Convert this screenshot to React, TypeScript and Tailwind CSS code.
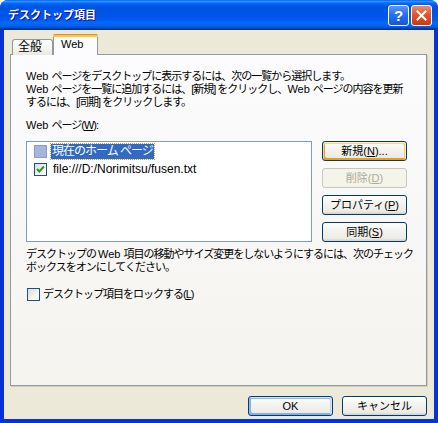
import React from "react";

const font = "font-['Liberation_Sans','Noto_Sans_CJK_JP',sans-serif]";

function U({ children }: { children: React.ReactNode }) {
  return <span className="underline underline-offset-[1px]">{children}</span>;
}

function Web() {
  return <span className="tracking-normal mr-[3px]">Web</span>;
}

function XpButton({
  children,
  variant = "normal",
}: {
  children: React.ReactNode;
  variant?: "normal" | "hot" | "default" | "disabled";
}) {
  const base =
    "w-[85px] h-[20px] rounded-[3px] border flex items-center justify-center text-[11px] leading-none";
  const styles: Record<string, string> = {
    normal:
      "border-[#003C74] text-black bg-[linear-gradient(180deg,#ffffff_0%,#f4f3ee_40%,#ecebe6_85%,#d6d0c5_100%)]",
    hot: "border-[#003C74] text-black bg-[linear-gradient(180deg,#ffffff_0%,#f4f3ee_40%,#ecebe6_85%,#d6d0c5_100%)] shadow-[inset_-1px_1px_#fff0cf,inset_1px_2px_#fdd889,inset_-2px_2px_#fbc761,inset_2px_-2px_#e5a01a]",
    default:
      "border-[#003C74] text-black bg-[linear-gradient(180deg,#ffffff_0%,#f4f3ee_40%,#ecebe6_85%,#d6d0c5_100%)] shadow-[inset_-1px_1px_#cee7ff,inset_1px_2px_#98b8ea,inset_-2px_2px_#bcd4f6,inset_1px_-1px_#89ade4,inset_2px_-2px_#89ade4]",
    disabled: "border-[#C9C7BA] text-[#ACA899] bg-[#F5F4EA]",
  };
  return <div className={`${base} ${styles[variant]}`}>{children}</div>;
}

function Check({ checked, tone = "normal" }: { checked?: boolean; tone?: "normal" | "selected" }) {
  if (tone === "selected") {
    return <div className="w-[13px] h-[13px] border border-[#8A9BC8] bg-[#A6B5DC] shrink-0" />;
  }
  return (
    <div className="w-[13px] h-[13px] border border-[#1C5180] bg-[linear-gradient(135deg,#dcdcd7_0%,#f4f4f0_60%,#ffffff_100%)] shrink-0 flex items-center justify-center">
      {checked && (
        <svg width="9" height="9" viewBox="0 0 9 9">
          <path d="M1 4 L3.3 6.5 L8 1.5" fill="none" stroke="#21A121" strokeWidth="2" />
        </svg>
      )}
    </div>
  );
}

export default function App() {
  return (
    <div className={`w-[438px] h-[423px] flex flex-col bg-[#0831D9] rounded-t-[8px] overflow-hidden ${font} text-[11px] leading-[13px] text-black`}>
      {/* title bar */}
      <div className="h-[30px] shrink-0 flex items-center pl-[8px] pr-[6px] bg-[linear-gradient(180deg,#0058ee_0%,#3593ff_4%,#288eff_6%,#127dff_8%,#036ffc_10%,#0262ee_14%,#0057e5_20%,#0054e3_24%,#0055eb_56%,#005bf5_66%,#026afe_76%,#0062ef_86%,#0052d6_92%,#0040ab_94%,#003092_100%)]">
        <div className="text-white font-bold text-[11px] tracking-[0px] [text-shadow:1px_1px_#0f1089] flex-1 pt-[1px]">
          デスクトップ項目
        </div>
        <div className="flex gap-[2px]">
          <div className="w-[21px] h-[21px] rounded-[3px] border border-white bg-[linear-gradient(180deg,#5a97f8_0%,#2a6ff0_45%,#1555e0_100%)] flex items-center justify-center text-white font-bold text-[15px] leading-none font-['Liberation_Sans',sans-serif]">
            ?
          </div>
          <div className="w-[21px] h-[21px] rounded-[3px] border border-white bg-[linear-gradient(180deg,#ea8c6e_0%,#e0552f_45%,#c63c12_100%)] flex items-center justify-center">
            <svg width="11" height="11" viewBox="0 0 11 11">
              <path d="M1.5 1.5 L9.5 9.5 M9.5 1.5 L1.5 9.5" stroke="white" strokeWidth="2" strokeLinecap="square" />
            </svg>
          </div>
        </div>
      </div>

      {/* client */}
      <div className="flex-1 mx-[4px] mb-[4px] bg-[#ECE9D8] flex flex-col pt-[4px] pl-[6px]">
        {/* tabs */}
        <div className="flex items-end h-[20px] pl-[2px] relative z-10">
          <div className="w-[41px] h-[16px] mb-[-1px] border border-[#919B9C] border-b-0 rounded-t-[3px] bg-[linear-gradient(180deg,#ffffff_0%,#f3f3ef_60%,#e8e7e0_100%)] flex items-center pl-[5px] text-[12px]">
            全般
          </div>
          <div className="w-[45px] h-[21px] mb-[-1px] border-x border-[#919B9C] rounded-t-[3px] bg-[#FCFCFE] flex flex-col">
            <div className="h-[3px] rounded-t-[2px] bg-[linear-gradient(180deg,#e68b2c_0%,#e68b2c_33%,#ffc73c_34%,#ffc73c_100%)] -mx-[1px]" />
            <div className="pl-[7px] pt-[1px]">Web</div>
          </div>
        </div>

        {/* panel */}
        <div className="w-[417px] h-[332px] border border-[#919B9C] bg-[linear-gradient(180deg,#fcfcfe_0%,#f4f3ee_100%)] shadow-[1px_1px_0_#d0cec0] pl-[15px] pt-[15px] flex flex-col">
          <div className="whitespace-nowrap tracking-[-1px]">
            <Web />ページをデスクトップに表示するには、次の一覧から選択します。
            <br />
            <Web />ページを一覧に追加するには、[新規] をクリックし、<Web />ページの内容を更新
            <br />
            するには、[同期] をクリックします。
          </div>
          <div className="mt-[10px] tracking-[-1px]">
            <Web />ページ(<U>W</U>):
          </div>
          <div className="mt-[9px] flex gap-[10px]">
            <div className="w-[286px] h-[101px] border border-[#7F9DB9] bg-white pt-[2px] pl-[7px] flex flex-col">
              <div className="h-[18px] flex items-start pt-[1px]">
                <Check tone="selected" />
                <div className="ml-[4px] -mt-[1px] h-[15px] px-[1px] bg-[#316AC5] text-white outline-1 outline-dotted outline-[#CE9D3A] tracking-[-1px] leading-[15px] text-[12px]">
                  現在のホーム ページ
                </div>
              </div>
              <div className="h-[18px] flex items-start pt-[1px]">
                <Check checked />
                <div className="ml-[6px] leading-[13px] text-[12px]">file:///D:/Norimitsu/fusen.txt</div>
              </div>
            </div>
            <div className="flex flex-col gap-[7px]">
              <XpButton variant="hot">
                新規(<U>N</U>)...
              </XpButton>
              <XpButton variant="disabled">
                削除(<U>D</U>)
              </XpButton>
              <XpButton>
                プロパティ(<U>P</U>)
              </XpButton>
              <XpButton>
                同期(<U>S</U>)
              </XpButton>
            </div>
          </div>
          <div className="mt-[6px] whitespace-nowrap tracking-[-1px]">
            デスクトップの <Web />項目の移動やサイズ変更をしないようにするには、次のチェック
            <br />
            ボックスをオンにしてください。
          </div>
          <div className="mt-[14px] flex items-center pl-[1px]">
            <Check />
            <div className="ml-[3px] tracking-[-1px]">
              デスクトップ項目をロックする(<U>L</U>)
            </div>
          </div>
        </div>

        {/* bottom buttons */}
        <div className="w-[417px] mt-[10px] flex justify-end gap-[9px]">
          <XpButton variant="default">OK</XpButton>
          <XpButton>キャンセル</XpButton>
        </div>
      </div>
    </div>
  );
}
